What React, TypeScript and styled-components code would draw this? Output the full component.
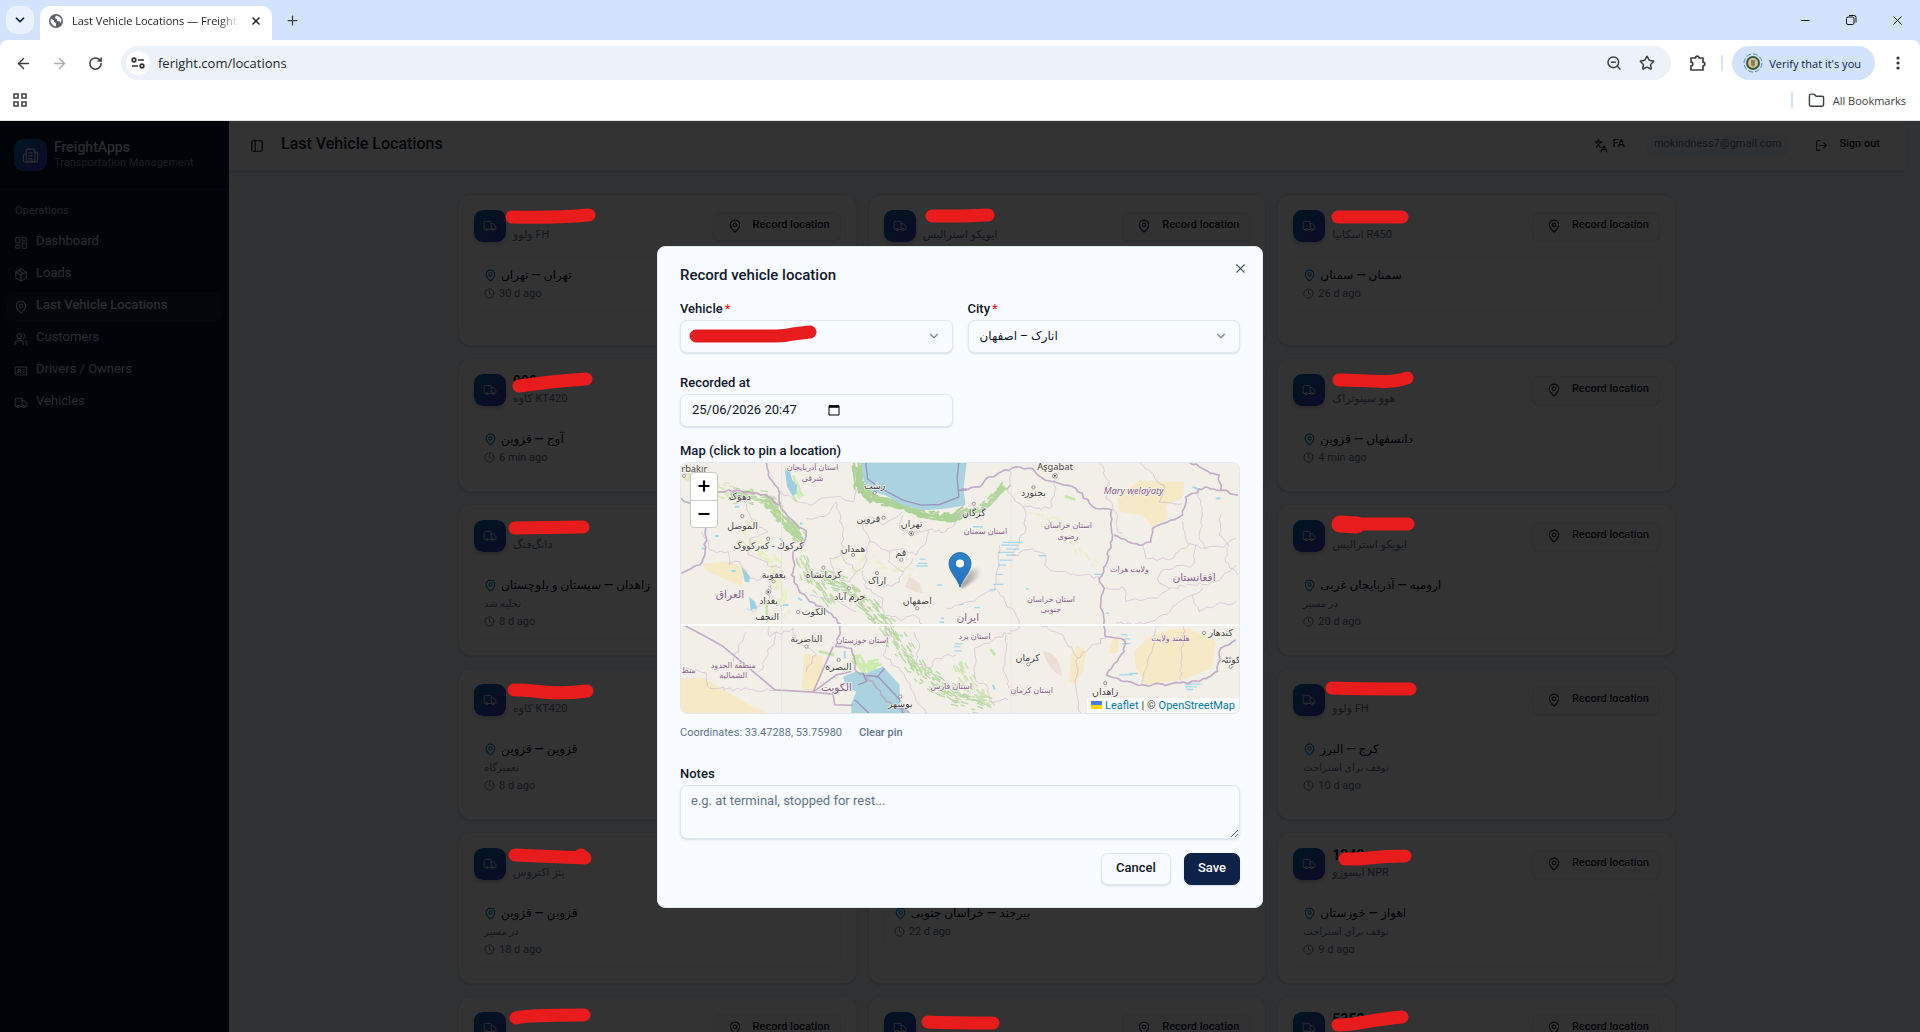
import React from "react";
import styled, { createGlobalStyle, css } from "styled-components";
import {
  ArrowLeft, ArrowRight, Building2, ChevronDown, Clock, Folder, IdCard, Languages, LayoutDashboard,
  LogOut, MapPin, Minus, Package, PanelLeft, Plus, RotateCw, Star, Truck, Users, X, ZoomOut,
} from "lucide-react";

const ui = `Roboto, "DejaVu Sans", sans-serif`;
const chromeFont = `"Open Sans", "Noto Sans", sans-serif`;
const ink = "#0f172a";
const muted = "#64748b";
const line = "#e2e8f0";

const GlobalStyle = createGlobalStyle`
  * { box-sizing: border-box; }
  body { margin: 0; font-family: ${ui}; color: ${ink}; }
  button, input, select, textarea { font: inherit; color: inherit; margin: 0; }
  button { padding: 0; border: 0; background: none; }
  a { text-decoration: none; color: inherit; }
`;

/* ---------- browser window ---------- */

const Window = styled.div`
  display: flex;
  flex-direction: column;
  height: 100vh;
  overflow: hidden;
`;
const Chrome = styled.header`
  flex: none;
  background: #d3e2fd;
  color: #3c4043;
  font-family: ${chromeFont};
`;
const TabStrip = styled.div`
  display: flex;
  align-items: center;
  height: 40px;
  padding: 0 15px 0 6px;
`;
const TabSearch = styled.button`
  display: grid;
  place-items: center;
  width: 28px;
  height: 28px;
  border-radius: 10px;
  background: #e9f0fe;
  color: #0b1f4b;
`;
const Tab = styled.div`
  display: flex;
  align-items: center;
  align-self: flex-end;
  gap: 9px;
  width: 232px;
  height: 34px;
  margin-left: 6px;
  padding: 0 8px 4px 9px;
  border-radius: 10px 10px 0 0;
  background: #fff;
  color: #1f1f1f;
`;
const TabTitle = styled.span`
  flex: 1;
  overflow: hidden;
  font-size: 11px;
  line-height: 18px;
  white-space: nowrap;
  mask-image: linear-gradient(90deg, #000 88%, transparent);
`;
const Glyph = styled.button`
  display: grid;
  place-items: center;
  width: ${(p: { $w?: number }) => p.$w ?? 16}px;
  height: 28px;
`;
const NewTab = styled(Glyph)`
  margin-left: 12px;
`;
const WindowControls = styled.div`
  display: flex;
  gap: 30px;
  margin-left: auto;
  color: #111;
`;
const Toolbar = styled.div`
  display: flex;
  align-items: center;
  height: 46px;
  padding: 0 15px;
  border-radius: 8px 8px 0 0;
  background: #fff;
`;
const NavButtons = styled.div`
  display: flex;
  gap: 20px;
  margin-right: 18px;
`;
const Omnibox = styled.div`
  display: flex;
  flex: 1;
  align-items: center;
  gap: 6px;
  height: 34px;
  padding: 0 16px 0 5px;
  border-radius: 17px;
  background: #ecf1fa;
`;
const SiteInfo = styled.button`
  display: grid;
  place-items: center;
  width: 24px;
  height: 24px;
  border-radius: 50%;
  background: #fff;
`;
const Address = styled.input`
  flex: 1;
  border: 0;
  outline: 0;
  background: none;
  color: #26292d;
  font-size: 13px;
  line-height: 20px;
`;
const OmniIcons = styled.div`
  display: flex;
  gap: 17px;
`;
const Bar = styled.span`
  width: 2px;
  height: 16px;
  background: #d3e2fd;
`;
const ToolbarEnd = styled.div`
  display: flex;
  align-items: center;
  gap: 16px;
  margin-left: 18px;
`;
const Profile = styled.button`
  display: flex;
  align-items: center;
  gap: 6px;
  height: 34px;
  margin-left: -7px;
  padding: 0 14px 0 11px;
  border-radius: 17px;
  background: #d3e2fd;
  color: #0b2355;
  font-size: 11px;
`;
const Bookmarks = styled.div`
  display: flex;
  align-items: center;
  justify-content: space-between;
  height: 35px;
  padding: 0 14px 6px 12px;
  border-bottom: 1px solid #dfe3e1;
  background: #fff;
  font-size: 11px;
`;
const BookmarkFolder = styled.button`
  display: flex;
  align-items: center;
  gap: 8px;
`;
const BookmarkEnd = styled.div`
  display: flex;
  align-items: center;
  gap: 15px;
`;

/* ---------- application shell ---------- */

const Page = styled.div`
  position: relative;
  display: flex;
  flex: 1;
  min-height: 0;
  overflow: hidden;
  background: #f1f5f9;
`;
const Sidebar = styled.aside`
  flex: none;
  width: 229px;
  background: #020f24;
  color: #cbd5e1;
`;
const Brand = styled.div`
  display: flex;
  align-items: center;
  gap: 7px;
  height: 69px;
  padding: 0 14px;
  border-bottom: 1px solid #1c2a40;
`;
const tile = css`
  display: grid;
  flex: none;
  place-items: center;
  border-radius: 9px;
  background: linear-gradient(135deg, #0369a1, #4338ca);
  color: #e2e8f0;
`;
const BrandMark = styled.span`
  ${tile}
  width: 33px;
  height: 32px;
`;
const BrandName = styled.div`
  padding-bottom: 2px;
  font-size: 14px;
  font-weight: 500;
  line-height: 17px;
`;
const BrandSub = styled.div`
  color: #8190a6;
  font-size: 11px;
  font-weight: 400;
  line-height: 14px;
`;
const GroupLabel = styled.h2`
  margin: 0;
  padding: 13px 15px 9px;
  color: #8c9ab0;
  font-size: 11px;
  font-weight: 500;
  line-height: 16px;
`;
const Menu = styled.nav`
  display: flex;
  flex-direction: column;
  gap: 3px;
  padding: 0 7px;
`;
const MenuItem = styled.a<{ $active?: boolean }>`
  display: flex;
  align-items: center;
  gap: 8px;
  height: 29px;
  padding: 0 7px;
  border-radius: 7px;
  background: ${(p) => (p.$active ? "#132034" : "transparent")};
  font-size: 13px;
  font-weight: ${(p) => (p.$active ? 500 : 400)};
`;
const Raised = styled.span`
  padding-bottom: 4px;
`;
const Main = styled.main`
  flex: 1;
  min-width: 0;
`;
const TopBar = styled.div`
  display: flex;
  align-items: center;
  height: 50px;
  padding: 0 25px 0 21px;
  border-bottom: 1px solid ${line};
  background: #fff;
  box-shadow: 0 1px 2px #94a3b866;
`;
const PageTitle = styled.h1`
  margin: 0 auto 0 17px;
  padding-bottom: 4px;
  font-size: 16px;
  font-weight: 500;
  line-height: 20px;
`;
const TopButton = styled.button<{ $gap: number }>`
  display: flex;
  align-items: center;
  gap: ${(p) => p.$gap}px;
  font-size: 11px;
  font-weight: 500;
`;
const Email = styled.span`
  margin: 0 27px 0 22px;
  padding: 2px 7px 5px;
  border-radius: 6px;
  background: #f1f5f9;
  color: ${muted};
  font-size: 11px;
  line-height: 14px;
`;
const ScrollTrack = styled.div`
  flex: none;
  width: 15px;
  background: #f1f5f9;
  border-left: 1px solid #e8edf3;
`;
const Grid = styled.div`
  display: grid;
  grid-template-columns: repeat(3, minmax(0, 1fr));
  gap: 12px 11px;
  max-width: 1218px;
  margin: 23px auto 0;
`;
const Card = styled.article`
  position: relative;
  padding: 15px;
  border: 1px solid ${line};
  border-radius: 13px;
  background: #fff;
  box-shadow: 0 1px 2px #94a3b866;
`;
const CardHead = styled.div`
  display: flex;
  align-items: center;
  gap: 7px;
  height: 32px;
  margin-bottom: 14px;
`;
const TruckTile = styled.span`
  ${tile}
  width: 32px;
  height: 32px;
  box-shadow: 0 2px 4px #64748b66;
`;
const Plate = styled.div`
  height: 15px;
  font-size: 14px;
  font-weight: 700;
  line-height: 15px;
`;
const Model = styled.div`
  height: 17px;
  padding-top: 3px;
  color: ${muted};
  font-size: 11px;
  line-height: 14px;
`;
const outline = css`
  border: 1px solid ${line};
  border-radius: 7px;
  background: #f8fbff;
  box-shadow: 0 1px 2px #94a3b855;
`;
const RecordButton = styled.button`
  ${outline}
  display: flex;
  align-items: center;
  justify-content: space-between;
  width: 128px;
  height: 29px;
  margin-left: auto;
  padding: 0 10px 0 14px;
  font-size: 11px;
  font-weight: 500;
`;
const Place = styled.div`
  padding: 9px;
  border: 1px solid #f1f5f9;
  border-radius: 8px;
  background: #fcfdfe;
`;
const PlaceLine = styled.div<{ $size?: number; $strong?: boolean }>`
  display: flex;
  align-items: center;
  gap: 4px;
  height: 18px;
  color: ${(p) => (p.$strong ? "#020617" : muted)};
  font-size: ${(p) => p.$size ?? 11}px;
  font-weight: ${(p) => (p.$strong ? 500 : 400)};
  white-space: nowrap;
`;
const TealPin = styled(MapPin)`
  color: #0284c7;
`;
const CardMark = styled.svg`
  position: absolute;
  z-index: 30;
  top: 0;
  left: 0;
  overflow: visible;
  pointer-events: none;
`;

/* ---------- dialog ---------- */

const Backdrop = styled.div`
  position: absolute;
  z-index: 20;
  inset: 0;
  background: rgba(0, 0, 0, 0.8);
`;
const DialogLayer = styled.div`
  position: absolute;
  z-index: 40;
  inset: 0;
  display: grid;
  place-items: center;
`;
const Dialog = styled.form`
  position: relative;
  width: 606px;
  padding: 18px 22px 22px;
  border: 1px solid ${line};
  border-radius: 8px;
  background: #f8fbff;
`;
const DialogTitle = styled.h2`
  margin: 0 0 15px;
  font-size: 15px;
  font-weight: 500;
  line-height: 20px;
`;
const CloseButton = styled.button`
  position: absolute;
  top: 14px;
  right: 14px;
  display: grid;
  place-items: center;
  width: 16px;
  height: 16px;
  color: #475569;
`;
const FieldGrid = styled.div`
  display: grid;
  grid-template-columns: 1fr 1fr;
  gap: 21px 15px;
  margin-bottom: 15px;
`;
const Field = styled.div`
  display: flex;
  flex-direction: column;
  gap: 2px;
`;
const Label = styled.label`
  font-size: 13px;
  font-weight: 500;
  line-height: 18px;
`;
const Required = styled.span`
  margin-left: 2px;
  color: #ef1c2b;
`;
const Control = styled.div`
  ${outline}
  position: relative;
  display: flex;
  align-items: center;
  height: 33px;
  padding: 0 11px;
`;
const Select = styled.select`
  flex: 1;
  height: 100%;
  margin-right: -14px;
  border: 0;
  outline: 0;
  appearance: none;
  background: none;
  font-size: 12px;
`;
const Chevron = styled(ChevronDown)`
  flex: none;
  color: #7b8794;
  pointer-events: none;
`;
const DateInput = styled.input`
  width: 136px;
  padding: 0 0 2px;
  border: 0;
  outline: 0;
  background: none;
  font-size: 13px;
`;
const MapBox = styled.div`
  position: relative;
  height: 252px;
  overflow: hidden;
  border: 1px solid ${line};
  border-radius: 7px;
  background: #f2efe9;
`;
const MapCanvas = styled.svg`
  display: block;
  width: 100%;
  height: 100%;
`;
const ZoomControl = styled.div`
  position: absolute;
  top: 9px;
  left: 9px;
  border: 1px solid #c9c8c4;
  border-radius: 4px;
  background: #fff;
`;
const ZoomButton = styled.button`
  display: grid;
  place-items: center;
  width: 26px;
  height: 27px;
  color: #000;
  & + & {
    border-top: 1px solid #ccc;
  }
`;
const Marker = styled.svg`
  position: absolute;
  left: calc(50% - 12px);
  top: 89px;
  overflow: visible;
`;
const Attribution = styled.div`
  position: absolute;
  right: 0;
  bottom: 0;
  display: flex;
  align-items: center;
  gap: 3px;
  padding: 0 4px;
  background: rgba(255, 255, 255, 0.8);
  color: #333;
  font-size: 11px;
  line-height: 15px;
  a {
    color: #0078a8;
  }
`;
const CoordinateRow = styled.div`
  display: flex;
  gap: 17px;
  margin: 10px 0 23px;
  color: ${muted};
  font-size: 11px;
  line-height: 18px;
`;
const ClearPin = styled.button`
  font-weight: 500;
`;
const Notes = styled.textarea`
  ${outline}
  display: block;
  width: 100%;
  height: 54px;
  padding: 7px 10px;
  outline: 0;
  resize: vertical;
  font-size: 13px;
  line-height: 16px;
  &::placeholder {
    color: ${muted};
  }
`;
const Actions = styled.div`
  display: flex;
  justify-content: flex-end;
  gap: 13px;
  margin-top: 14px;
`;
const Action = styled.button<{ $primary?: boolean }>`
  ${outline}
  height: 32px;
  padding: 0 14px 2px;
  font-size: 13px;
  font-weight: 500;
  ${(p) => p.$primary && css`
    border-color: #0c2347;
    background: #0c2347;
    color: #f8fbff;
    padding: 0 13px 2px;
  `}
`;

/* ---------- data ---------- */

type Vehicle = { plate: string; model: string; place: string; note?: string; ago: string; mark?: string; blob?: string };

const vehicles: Vehicle[] = [
  { plate: "", model: "ولوو FH", place: "تهران — تهران", ago: "30 d ago", mark: "M53 22Q95 23 130 20" },
  { plate: "", model: "ایویکو استرالیس", place: "تهران — تهران", note: "در مسیر", ago: "30 d ago", mark: "M63 21L95 21L119 20" },
  { plate: "", model: "اسکانیا R450", place: "سمنان — سمنان", ago: "26 d ago", mark: "M60 22L124 22" },
  { plate: "993", model: "کاوه KT420", place: "آوج — قزوین", ago: "6 min ago", mark: "M60 27Q95 22 127 20" },
  { plate: "", model: "ولوو FH", place: "قزوین — قزوین", ago: "6 min ago" },
  { plate: "", model: "هوو سینوتراک", place: "دانسفهان — قزوین", ago: "4 min ago", mark: "M61 21C80 20 110 26 129 19" },
  { plate: "", model: "دانگ‌فنگ", place: "زاهدان — سیستان و بلوچستان", note: "تخلیه شد", ago: "8 d ago", mark: "M56 23L124 22" },
  { plate: "", model: "ولوو FH", place: "قزوین — قزوین", ago: "8 d ago" },
  { plate: "", model: "ایویکو استرالیس", place: "ارومیه — آذربایجان غربی", note: "در مسیر", ago: "20 d ago", mark: "M62 19L130 19", blob: "M62 19L79 20" },
  { plate: "", model: "کاوه KT420", place: "قزوین — قزوین", note: "تعمیرگاه", ago: "8 d ago", mark: "M55 21C75 20 90 27 128 22" },
  { plate: "", model: "ولوو FH", place: "قزوین — قزوین", ago: "8 d ago" },
  { plate: "", model: "ولوو FH", place: "کرج — البرز", note: "توقف برای استراحت", ago: "10 d ago", mark: "M54 19Q80 20 132 20" },
  { plate: "", model: "بنز اکتروس", place: "قزوین — قزوین", note: "در مسیر", ago: "18 d ago", mark: "M56 22L126 25L122 22" },
  { plate: "", model: "ولوو FH", place: "بیرجند — خراسان جنوبی", ago: "22 d ago" },
  { plate: "1343", model: "ایسوزو NPR", place: "اهواز — خوزستان", note: "توقف برای استراحت", ago: "9 d ago", mark: "M67 26C90 27 90 23 127 23" },
  { plate: "", model: "کاوه KT420", place: "قزوین — قزوین", ago: "8 d ago", mark: "M57 21Q66 18 125 18" },
  { plate: "", model: "ولوو FH", place: "قزوین — قزوین", ago: "8 d ago", mark: "M59 25Q80 26 124 26" },
  { plate: "5353", model: "ولوو FH", place: "قزوین — قزوین", ago: "8 d ago", mark: "M60 28C80 28 90 23 124 20" },
];

const menu = [
  { label: "Dashboard", icon: LayoutDashboard },
  { label: "Loads", icon: Package },
  { label: "Last Vehicle Locations", icon: MapPin, active: true },
  { label: "Customers", icon: Users },
  { label: "Drivers / Owners", icon: IdCard },
  { label: "Vehicles", icon: Truck },
];

/* ---------- map ---------- */

type Pt = [number, number];

/** Breaks a polyline into short uneven steps, the way surveyed borders wander. */
function wander(points: string, amount = 6) {
  const pts = points.split(" ").map((p) => p.split(",").map(Number) as Pt);
  let seed = pts[0][0] * 13 + pts[0][1] * 7;
  const next = () => {
    seed = (seed * 9301 + 49297) % 233280;
    return seed / 233280 - 0.5;
  };
  let d = `M${pts[0][0]} ${pts[0][1]}`;
  for (let i = 1; i < pts.length; i++) {
    const [ax, ay] = pts[i - 1];
    const [bx, by] = pts[i];
    const steps = Math.max(1, Math.round(Math.hypot(bx - ax, by - ay) / 12));
    for (let s = 1; s <= steps; s++) {
      const t = s / steps;
      const j = s === steps ? 0 : amount;
      d += `L${(ax + (bx - ax) * t + next() * j * 2).toFixed(1)} ${(ay + (by - ay) * t + next() * j * 2).toFixed(1)}`;
    }
  }
  return d;
}

/** Short strokes scattered round a line: woodland and scrub along a ridge. */
function scatter(points: string, spread: number, count: number) {
  const pts = points.split(" ").map((p) => p.split(",").map(Number) as Pt);
  let seed = 4711 + pts[0][0];
  const next = () => {
    seed = (seed * 9301 + 49297) % 233280;
    return seed / 233280;
  };
  let d = "";
  for (let i = 1; i < pts.length; i++) {
    const [ax, ay] = pts[i - 1];
    const [bx, by] = pts[i];
    const len = Math.hypot(bx - ax, by - ay);
    const n = Math.round((count * len) / 100);
    for (let k = 0; k < n; k++) {
      const t = next();
      const off = (next() + next() - 1) * spread;
      const x = ax + (bx - ax) * t - ((by - ay) / len) * off;
      const y = ay + (by - ay) * t + ((bx - ax) / len) * off;
      const l = 6 + next() * 14;
      d += `M${x.toFixed(1)} ${y.toFixed(1)}l${(((bx - ax) / len) * l).toFixed(1)} ${(((by - ay) / len) * l + next() * 6 - 3).toFixed(1)}`;
    }
  }
  return d;
}

const countries = [
  "290,21 300,70 325,100 330,150 360,190 410,228 400,270 370,290 375,330 365,360 385,400 420,440 455,455 500,490 510,520 498,575 545,580",
  "33,130 70,150 108,120 150,110 200,105 285,118 330,150",
  "33,355 90,330 105,290 108,215 95,170",
  "545,580 560,650 590,665 620,700 650,740 720,775",
  "870,105 930,95 960,65 1040,35 1090,40 1120,70 1170,85 1220,100 1280,160 1327,165 1330,240 1310,330 1290,370 1305,400 1295,440 1308,545 1365,555 1365,590 1312,660 1408,692 1500,688 1590,680 1645,650 1655,580 1700,555",
  "1335,240 1410,270 1445,260 1450,220 1540,180 1550,125 1610,95 1660,105 1707,120",
  "1560,21 1600,40 1650,60 1655,105",
];
const straight = [
  "M40 510Q110 545 160 575L250 650L315 705L430 712L490 575",
  "M430 712L490 718L495 750L550 752",
  "M545 650L500 660L430 712",
];
const provinces = [
  "95,230 120,285 175,290 178,330 210,320 240,370 300,375 300,430 250,470 230,460",
  "180,110 230,150 250,200 295,230 240,250 235,300 330,340 335,330",
  "325,110 420,150 440,140 500,125 550,140 570,95",
  "410,190 470,180 500,140",
  "500,140 520,230 515,300 560,350 580,340 600,260 580,210 600,185 640,210 700,170",
  "515,300 480,310 490,360 540,380 560,350",
  "700,180 690,220 730,240 775,225 770,260 740,300 700,280 660,290 655,320 700,350 730,310",
  "775,225 830,230 880,170 885,130",
  "600,260 660,290",
  "580,345 590,400 640,430 640,480 700,495 730,480 760,510",
  "420,420 480,430 520,450 560,470",
  "640,400 690,380 700,350",
  "735,530 750,580 740,620 780,640 800,610 860,600",
  "640,480 660,530 640,600 690,640 735,720 770,775",
  "830,460 900,440 980,400 1050,500 1050,520 930,575 915,580 920,680 950,690 960,740 1015,735",
  "990,270 985,340 975,405",
  "1025,50 1015,110 1060,155 1070,220 1030,300",
  "1060,155 1140,160 1160,100 1155,75",
  "1030,300 1090,280 1130,300 1125,330 1160,350 1250,360 1295,370",
  "1120,515 1180,540 1225,610 1220,700 1235,775",
  "1225,610 1260,580 1308,550",
  "1290,25 1320,80 1310,130 1345,180 1345,230 1360,235",
  "1410,21 1485,90 1470,140 1540,145",
  "1420,270 1430,310 1500,315 1560,270 1540,200",
  "1560,265 1610,280 1670,270 1700,250",
  "1590,110 1600,180 1590,240 1610,280",
  "1655,180 1650,240 1680,270 1670,320 1707,360",
  "1310,400 1365,400 1370,440 1460,430 1500,400 1465,370 1480,345 1570,330 1580,270",
  "1500,400 1570,390 1640,380 1700,330",
  "1340,505 1390,510 1460,495 1520,450 1570,420 1600,400",
  "1570,420 1590,470 1640,450 1700,440",
  "1465,515 1450,580 1415,690",
  "1545,510 1538,600 1535,680",
  "230,530 190,620",
  "265,650 295,600 320,530",
  "33,640 110,655 120,700 250,705 315,705",
  "300,510 300,545 370,520 390,570 440,600 410,650",
  "1010,540 1000,640 1020,700",
];
const desert = [
  "M33 672L100 668L170 710L230 745L290 775L33 775Z",
  "M405 595L458 605L460 640L430 712L395 700Z",
  "M100 325L180 320L220 340L215 395L150 365L105 345Z",
  "M1345 130L1410 75L1480 80L1545 80L1540 130L1490 150L1495 190L1450 215L1420 180L1350 170Z",
  "M1395 590L1440 545L1500 525L1560 520L1640 560L1630 640L1540 675L1430 690L1400 640Z",
  "M1205 600L1225 570L1250 590L1240 650L1220 685L1200 680Z",
  "M1325 560L1350 540L1345 590L1320 600Z",
];
const cities: [string, number, number][] = [
  ["rbakır", 73, 50], ["دهۆک", 210, 134], ["الموصل", 218, 222], ["كركوك - کەرکووک", 296, 282], ["بعقوبة", 312, 368],
  ["بغداد", 296, 448], ["النجف", 292, 496], ["الكوت", 432, 480], ["الناصرية", 410, 562], ["البصرة", 506, 646],
  ["رشت", 615, 102], ["قزوین", 596, 200], ["تهران", 726, 216], ["همدان", 550, 290], ["قم", 694, 302], ["کرمانشاه", 462, 368],
  ["اراک", 622, 388], ["خرم آباد", 540, 434], ["اصفهان", 743, 446], ["بوشهر", 692, 756], ["گرگان", 913, 182],
  ["بجنورد", 1092, 124], ["Aşgabat", 1157, 43], ["کرمان", 1075, 618], ["زاهدان", 1308, 720], ["کندهار", 1655, 544], ["کوئٹہ", 1685, 624],
];
const dots: Pt[] = [
  [42, 62], [217, 183], [295, 251], [311, 379], [385, 471], [410, 575], [507, 615], [615, 113], [642, 188], [550, 300], [695, 314],
  [461, 338], [622, 354], [538, 400], [743, 460], [692, 725], [913, 146], [1092, 96], [1077, 628], [1308, 685], [1605, 534], [1685, 636],
];
const capitals: Pt[] = [[725, 235], [295, 411], [1157, 62]];
const regions: [string, number, number, number][] = [
  ["استان آذربایجان", 428, 43, 24], ["شرقی", 428, 76, 24], ["العراق", 180, 430, 32], ["منطقة الحدود", 190, 640, 24],
  ["الشمالية", 190, 670, 24], ["منط", 56, 655, 24], ["الكويت", 500, 710, 32], ["استان خوزستان", 578, 564, 24],
  ["استان فارس", 845, 703, 24], ["ایران", 895, 498, 32], ["استان یزد", 915, 552, 24], ["استان سمنان", 948, 236, 24],
  ["استان خراسان", 1196, 218, 24], ["رضوی", 1196, 252, 24], ["استان خراسان", 1145, 440, 24], ["جنوبی", 1145, 472, 24],
  ["ولايت هرات", 1381, 351, 24], ["افغانستان", 1575, 378, 32], ["هلمند ولايت", 1504, 558, 24], ["استان کرمان", 1087, 714, 24],
];
const salt = "M1000 262h60M995 270h50M1010 282h40M985 292h45M1010 300h30M990 315h40M985 330h25M980 358h20M972 388h30M960 404h20M745 325h28M740 333h35M750 312h18M855 567h24M853 575h20M855 588h22M815 490h8M810 502h14M1350 660h40M1380 656h26M1550 688h50M1548 696h36M1552 704h20M1108 302h22M1275 358h24M1355 540h20M1365 552h18M1360 566h24M803 390h14M1310 475h10M1070 402h10M915 458h16M870 448h12M910 215h30M955 240h10";

function IranMap() {
  return (
    <MapCanvas viewBox="33 21 1677 756" preserveAspectRatio="xMidYMid slice" role="img" aria-label="Map of Iran">
      <rect x="0" y="0" width="1760" height="800" fill="#f2efe9" />
      <g fill="#f5e9c6">{desert.map((d) => <path key={d} d={d} />)}</g>
      <path d="M720 365L750 385L760 415L735 410L705 395Z M1120 590Q1165 585 1180 665Q1140 650 1120 590Z" fill="#ecdfd6" />
      <g fill="none" strokeLinecap="round">
        <path d={scatter("33,60 120,90 190,110", 36, 26)} stroke="#dfe8bd" strokeWidth="5" />
        <path d={scatter("230,200 250,270 320,330 350,480", 30, 16)} stroke="#e7efc5" strokeWidth="6" />
        <path d={scatter("500,300 560,350 600,310 730,350", 30, 8)} stroke="#e9efcf" strokeWidth="6" />
        <path d={scatter("1050,165 1150,190 1230,270 1270,330", 22, 9)} stroke="#e8efcd" strokeWidth="5" />
        <path d={scatter("180,120 290,130 330,185 390,245", 26, 56)} stroke="#b9d8a4" strokeWidth="4" />
        <path d={scatter("290,140 330,185 390,245", 20, 50)} stroke="#b3d69c" strokeWidth="5" />
        <path d={scatter("395,300 415,360 450,400 480,440", 26, 34)} stroke="#c0dcab" strokeWidth="4" />
        <path d={scatter("440,365 530,395 600,455 650,505", 30, 46)} stroke="#b9d8a4" strokeWidth="4" />
        <path d={scatter("650,505 700,580 760,660 850,720 960,750", 40, 46)} stroke="#bbdaa6" strokeWidth="4" />
        <path d={scatter("860,620 900,690 960,745", 26, 20)} stroke="#cfe3b4" strokeWidth="5" />
        <path d={scatter("562,21 570,95 605,130 680,145 770,180 850,190 880,170", 17, 70)} stroke="#acd297" strokeWidth="6" />
        <path d={scatter("870,180 940,160 1005,95", 13, 50)} stroke="#b4d69f" strokeWidth="5" />
        <path d={scatter("350,40 370,90 385,120", 18, 20)} stroke="#cdeab0" strokeWidth="8" />
        <path d={scatter("550,600 580,640 620,630", 18, 34)} stroke="#cdeab0" strokeWidth="8" />
        <path d="M290 440L292 500M450 590L490 600M1190 124L1215 132M965 585L975 598" stroke="#c4e4ac" strokeWidth="8" />
      </g>
      <path d="M575 21L582 80L605 108L650 122L700 150L760 166L830 160L888 150L882 100L892 21Z" fill="#aad3df" />
      <path d="M520 665L560 650L590 655L640 635L690 690L690 730L715 777L545 777L545 745L560 710L530 695Z" fill="#aad3df" />
      <path d="M345 45L360 50L368 75L382 90L380 115L368 122L352 95Z M215 335L240 365L238 382L225 380ZM238 425L255 440L262 460L242 465Z" fill="#9dcfe2" />
      <path d={salt} stroke="#a6d7ea" strokeWidth="4" fill="none" />
      <path d="M95 280h10M135 243h12M185 348h14M330 250l8 10M195 155h14M385 430l12 6M340 450h16M1570 95l20 8M1640 130h14M970 690l6 14M525 590v20M390 205h8" stroke="#a6d7ea" strokeWidth="6" fill="none" />
      <g fill="none" stroke="#c9b3cd" strokeWidth="2" opacity=".85">
        {provinces.map((p) => <path key={p} d={wander(p)} />)}
      </g>
      <g fill="none" stroke="#bda2c1" strokeWidth="5" opacity=".85">
        {countries.map((p) => <path key={p} d={wander(p, 4)} />)}
        {straight.map((d) => <path key={d} d={d} />)}
      </g>
      <path d="M588 21L594 72L640 103L700 135L755 150L810 148L868 126L863 70L868 21M868 105L892 105M565 690L590 680L580 655M590 662L625 665L690 735L700 777M555 735L600 777M620 670L645 640" fill="none" stroke="#9a94bd" strokeWidth="4" />
      <path d="M335 21V777M1025 21V777" stroke="#e4e0dc" strokeWidth="2" />
      <path d="M0 510H1760" stroke="#fff" strokeWidth="6" />
      <g fill="#f2efe9" stroke="#777" strokeWidth="2">
        {dots.map(([x, y]) => <circle key={`${x}-${y}`} cx={x} cy={y} r="5" />)}
        {capitals.map(([x, y]) => <circle key={`${x}-${y}`} cx={x} cy={y} r="7" />)}
      </g>
      <g fill="#555">{capitals.map(([x, y]) => <circle key={`${x}-${y}`} cx={x} cy={y} r="3" />)}</g>
      <g fontFamily='"Noto Sans", "DejaVu Sans", sans-serif' textAnchor="middle" stroke="#f7f4ef" strokeWidth="4" paintOrder="stroke" strokeLinejoin="round">
        <g fill="#444" fontSize="28">{cities.map(([t, x, y]) => <text key={t} x={x} y={y}>{t}</text>)}</g>
        <g fill="#8d618b">
          {regions.map(([t, x, y, s]) => <text key={`${t}-${x}`} x={x} y={y} fontSize={s}>{t}</text>)}
          <text x="1393" y="118" fontSize="28" fontStyle="italic">Mary welaýaty</text>
        </g>
      </g>
    </MapCanvas>
  );
}

/* ---------- parts ---------- */

function BrowserChrome() {
  return (
    <Chrome>
      <TabStrip>
        <TabSearch aria-label="Search tabs"><ChevronDown size={14} strokeWidth={3} /></TabSearch>
        <Tab>
          <svg width="14" height="14" viewBox="0 0 14 14" aria-hidden="true">
            <circle cx="7" cy="7" r="7" fill="#5f6368" />
            <path d="M2 4.500L5 6.500 5 8 7 9 7 12.500 4 11.500 1.500 8ZM7 1.500L6 4 8 5 8 7 11 7.500 12 9.500 12.500 5 10 2.500Z" fill="#fff" />
          </svg>
          <TabTitle>Last Vehicle Locations — FreightApps</TabTitle>
          <Glyph aria-label="Close tab"><X size={12} strokeWidth={3} /></Glyph>
        </Tab>
        <NewTab aria-label="New tab"><Plus size={15} strokeWidth={2} /></NewTab>
        <WindowControls>
          <Glyph aria-label="Minimize"><Minus size={13} strokeWidth={2} /></Glyph>
          <Glyph aria-label="Restore">
            <svg width="12" height="12" viewBox="0 0 12 12" fill="none" stroke="#111">
              <rect x="1.500" y="3" width="7.500" height="7.500" rx="1.500" />
              <path d="M4 1.500h5a2 2 0 0 1 2 2v5" />
            </svg>
          </Glyph>
          <Glyph aria-label="Close"><X size={15} strokeWidth={1.5} /></Glyph>
        </WindowControls>
      </TabStrip>
      <Toolbar>
        <NavButtons>
          <Glyph aria-label="Back"><ArrowLeft size={17} /></Glyph>
          <Glyph aria-label="Forward" disabled><ArrowRight size={17} color="#aaa" /></Glyph>
          <Glyph aria-label="Reload"><RotateCw size={15} strokeWidth={2.4} /></Glyph>
        </NavButtons>
        <Omnibox>
          <SiteInfo aria-label="Site information">
            <svg width="14" height="12" viewBox="0 0 14 12" fill="none" stroke="#333" strokeWidth="1.700">
              <circle cx="3" cy="3" r="1.800" /><path d="M7 3h6M1 9h6" /><circle cx="11" cy="9" r="1.800" />
            </svg>
          </SiteInfo>
          <Address aria-label="Address" defaultValue="feright.com/locations" />
          <OmniIcons>
            <Glyph aria-label="Zoom"><ZoomOut size={16} strokeWidth={2.2} /></Glyph>
            <Glyph aria-label="Bookmark"><Star size={16} strokeWidth={2.2} /></Glyph>
          </OmniIcons>
        </Omnibox>
        <ToolbarEnd>
          <Glyph aria-label="Extensions">
            <svg width="18" height="18" viewBox="0 0 18 18" fill="none" stroke="#3c4043" strokeWidth="1.700" strokeLinejoin="round">
              <path d="M2 4h4.500a1.800 1.800 0 0 1 3.600 0H14v4.200a1.800 1.800 0 0 1 0 3.600V16H2v-4.200a1.800 1.800 0 0 0 0-3.600Z" />
            </svg>
          </Glyph>
          <Bar />
          <Profile>
            <svg width="20" height="20" viewBox="0 0 20 20" aria-hidden="true">
              <circle cx="10" cy="10" r="9" fill="none" stroke="#5b7fbd" strokeDasharray="5 2" />
              <circle cx="10" cy="10" r="7" fill="#3f5a3c" />
              <circle cx="10" cy="10" r="5" fill="#cfc59a" />
              <path d="M8 7v5l2 2 2-2V7Z" fill="#8a7f5c" />
            </svg>
            Verify that it's you
          </Profile>
          <Glyph $w={14} aria-label="Menu">
            <svg width="4" height="14" fill="#333"><circle cx="2" cy="2" r="1.600" /><circle cx="2" cy="7" r="1.600" /><circle cx="2" cy="12" r="1.600" /></svg>
          </Glyph>
        </ToolbarEnd>
      </Toolbar>
      <Bookmarks>
        <Glyph aria-label="Apps">
          <svg width="14" height="14" fill="none" stroke="#444" strokeWidth="1.600">
            <path d="M1 1h4v4H1ZM9 1h4v4H9ZM1 9h4v4H1ZM9 9h4v4H9Z" />
          </svg>
        </Glyph>
        <BookmarkEnd>
          <Bar />
          <BookmarkFolder><Folder size={17} />All Bookmarks</BookmarkFolder>
        </BookmarkEnd>
      </Bookmarks>
    </Chrome>
  );
}

function VehicleCard({ v }: { v: Vehicle }) {
  return (
    <Card>
      <CardHead>
        <TruckTile><Truck size={14} strokeWidth={1.5} /></TruckTile>
        <div>
          <Plate>{v.plate}</Plate>
          <Model>{v.model}</Model>
        </div>
        <RecordButton><MapPin size={14} /><Raised>Record location</Raised></RecordButton>
      </CardHead>
      <Place>
        <PlaceLine $strong $size={12}><TealPin size={13} />{v.place}</PlaceLine>
        {v.note && <PlaceLine $size={10}>{v.note}</PlaceLine>}
        <PlaceLine><Clock size={11} />{v.ago}</PlaceLine>
      </Place>
      {v.mark && (
        <CardMark width="140" height="40" fill="none" stroke="#e81c1c" strokeWidth="13" strokeLinecap="round" strokeLinejoin="round">
          <path d={v.mark} />
          {v.blob && <path d={v.blob} strokeWidth="17" />}
        </CardMark>
      )}
    </Card>
  );
}

function RecordDialog() {
  return (
    <DialogLayer>
      <Dialog role="dialog" aria-labelledby="dialog-title" onSubmit={(e) => e.preventDefault()}>
        <DialogTitle id="dialog-title">Record vehicle location</DialogTitle>
        <CloseButton type="button" aria-label="Close"><X size={15} strokeWidth={1.7} /></CloseButton>
        <FieldGrid>
          <Field>
            <Label htmlFor="vehicle">Vehicle<Required>*</Required></Label>
            <Control>
              <Select id="vehicle"><option></option></Select>
              <Chevron size={14} />
              <CardMark width="140" height="32" fill="none" stroke="#e81c1c" strokeWidth="13" strokeLinecap="round">
                <path d="M15 15H95Q104 15 112 13L129 11" />
              </CardMark>
            </Control>
          </Field>
          <Field>
            <Label htmlFor="city">City<Required>*</Required></Label>
            <Control>
              <Select id="city"><option>انارک – اصفهان</option></Select>
              <Chevron size={14} />
            </Control>
          </Field>
          <Field>
            <Label htmlFor="recorded">Recorded at</Label>
            <Control>
              <DateInput id="recorded" defaultValue="25/06/2026 20:47" />
              <Glyph $w={12} type="button" aria-label="Pick a date">
                <svg width="12" height="12" fill="none" stroke="#000"><path d="M1 2h10v9H1Z" /><path d="M1 2.500h10" strokeWidth="2.500" /></svg>
              </Glyph>
            </Control>
          </Field>
        </FieldGrid>
        <Field>
          <Label as="div">Map (click to pin a location)</Label>
          <MapBox>
            <IranMap />
            <Marker width="25" height="41" viewBox="0 0 25 41" aria-hidden="true">
              <defs>
                <linearGradient id="shade" x1="0" x2="1"><stop stopColor="#000" stopOpacity=".45" /><stop offset="1" stopColor="#000" stopOpacity="0" /></linearGradient>
                <linearGradient id="pin" x1="0" x2="0" y1="0" y2="1"><stop stopColor="#2e80c4" /><stop offset="1" stopColor="#1f74c9" /></linearGradient>
                <filter id="soft" x="-20%" y="-20%" width="140%" height="140%"><feGaussianBlur stdDeviation="1.5" /></filter>
              </defs>
              <path d="M12 35L22 19Q31 14 34 19Q34 25 14 36Z" fill="url(#shade)" filter="url(#soft)" />
              <path d="M12 35C10 27 1 20 1 11.500A11 11 0 0 1 23 11.500C23 20 14 27 12 35Z" fill="url(#pin)" stroke="#3274a3" />
              <circle cx="12" cy="11.500" r="4" fill="#fff" />
            </Marker>
            <ZoomControl>
              <ZoomButton type="button" aria-label="Zoom in"><Plus size={16} strokeWidth={3.2} /></ZoomButton>
              <ZoomButton type="button" aria-label="Zoom out"><Minus size={16} strokeWidth={3.2} /></ZoomButton>
            </ZoomControl>
            <Attribution>
              <svg width="11" height="8"><rect width="11" height="4" fill="#4c7be1" /><rect y="4" width="11" height="4" fill="#ffd500" /></svg>
              <a href="#leaflet">Leaflet</a>
              <span>| ©</span>
              <a href="#osm">OpenStreetMap</a>
            </Attribution>
          </MapBox>
        </Field>
        <CoordinateRow>
          <span>Coordinates: 33.47288, 53.75980</span>
          <ClearPin type="button">Clear pin</ClearPin>
        </CoordinateRow>
        <Field>
          <Label htmlFor="notes">Notes</Label>
          <Notes id="notes" placeholder="e.g. at terminal, stopped for rest..." />
        </Field>
        <Actions>
          <Action type="button">Cancel</Action>
          <Action $primary type="submit">Save</Action>
        </Actions>
      </Dialog>
    </DialogLayer>
  );
}

export default function App() {
  return (
    <Window>
      <GlobalStyle />
      <BrowserChrome />
      <Page>
        <Sidebar>
          <Brand>
            <BrandMark><Building2 size={17} strokeWidth={1.5} /></BrandMark>
            <BrandName>FreightApps<BrandSub>Transportation Management</BrandSub></BrandName>
          </Brand>
          <GroupLabel>Operations</GroupLabel>
          <Menu>
            {menu.map(({ label, icon: Icon, active }) => (
              <MenuItem key={label} href="#" $active={active}>
                <Icon size={14} strokeWidth={1.8} />
                <Raised>{label}</Raised>
              </MenuItem>
            ))}
          </Menu>
        </Sidebar>
        <Main>
          <TopBar>
            <PanelLeft size={14} />
            <PageTitle>Last Vehicle Locations</PageTitle>
            <TopButton $gap={4}><Languages size={14} /><Raised>FA</Raised></TopButton>
            <Email>mokindness7@gmail.com</Email>
            <TopButton $gap={11}><LogOut size={13} /><Raised>Sign out</Raised></TopButton>
          </TopBar>
          <Grid>
            {vehicles.map((v, i) => <VehicleCard key={i} v={v} />)}
          </Grid>
        </Main>
        <ScrollTrack />
        <Backdrop />
        <RecordDialog />
      </Page>
    </Window>
  );
}
